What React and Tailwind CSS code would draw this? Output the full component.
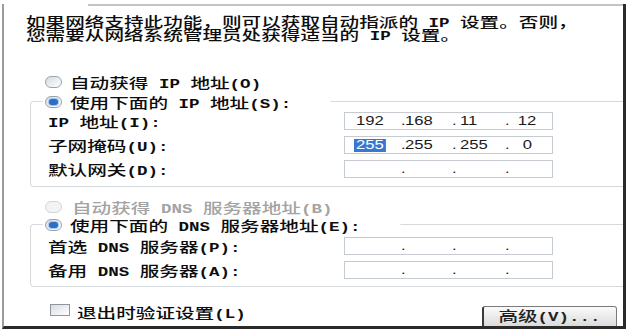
import React from 'react';

// latin parts render half-width, like the old dialog font
const L = ({ children }) => (
  <span className="font-['Liberation_Mono',monospace] text-[12.5px] font-bold leading-none">{children}</span>
);

// the screenshot is stretched sideways, so text is stretched too
const T = ({ children, className = '' }) => (
  <span className={`inline-block origin-left scale-x-[1.4] whitespace-nowrap leading-[14px] ${className}`}>
    {children}
  </span>
);

const Radio = ({ on, disabled }) => (
  <span
    className={`flex h-[12px] w-[17px] shrink-0 items-center justify-center rounded-full border ${
      disabled ? 'border-[#d2d6da] bg-[#f2f3f4]' : 'border-[#9aa3ad] bg-linear-to-br from-[#d6dae0] to-[#ffffff]'
    }`}
  >
    {on && <span className="h-[6px] w-[9px] rounded-full bg-[#2b6ec6] shadow-[0_0_0_1px_#a6c8ee]" />}
  </span>
);

const Num = ({ children, className = '' }) => (
  <span className={`inline-block origin-left scale-x-[1.33] leading-[13px] ${className}`}>{children}</span>
);

const IpBox = ({ v, hl }) => (
  <div className="flex h-[18px] w-[209px] items-center border border-[#c6cbd1] bg-white font-['Liberation_Sans',sans-serif] text-[12.5px] font-normal text-[#1a1a1a]">
    <div className={`w-[56px] ${hl ? 'pl-[9px]' : 'pl-[11px]'}`}>
      {v && <Num className={hl ? 'bg-[#3579d4] px-[1.5px] text-white' : ''}>{v[0]}</Num>}
    </div>
    <div className="w-[4px]"><Num>.</Num></div>
    <div className="w-[47px]">{v && <Num>{v[1]}</Num>}</div>
    <div className="w-[4px]"><Num>.</Num></div>
    <div className="w-[49px] pl-[4px]">{v && <Num>{v[2]}</Num>}</div>
    <div className="w-[4px]"><Num>.</Num></div>
    <div className="w-[36px] text-center">
      {v && <span className="inline-block origin-center scale-x-[1.33] leading-[13px]">{v[3]}</span>}
    </div>
  </div>
);

const Row = ({ label, v, hl }) => (
  <div className="flex h-[24px] items-center">
    <div className="w-[313px] pl-[17px]">
      <T>{label}</T>
    </div>
    <IpBox v={v} hl={hl} />
  </div>
);

export default function App() {
  return (
    <div className="h-[331px] w-[627px] overflow-hidden bg-white pl-[2px] pt-[4px] font-['Noto_Sans_CJK_SC',sans-serif] text-[14px] font-medium text-[#0d0d0d]">
      <div className="h-[325px] w-[624px] overflow-hidden border-b-[3px] border-l-2 border-r-[3px] border-b-[#2b2b2b] border-l-[#9c9c9c] border-r-[#2b2b2b]">
        <div className="ml-[84px] h-[2px] bg-[#c4c4c4]" />

        {/* intro text */}
        <div className="mt-[10px] pl-[22px]">
          <div className="flex h-[13px] items-center">
            <T className="leading-[12px]">如果网络支持此功能，则可以获取自动指派的<L> IP </L>设置。否则，</T>
          </div>
          <div className="flex h-[13px] items-center">
            <T className="leading-[12px]">您需要从网络系统管理员处获得适当的<L> IP </L>设置。</T>
          </div>
        </div>

        {/* IP */}
        <div className="mt-[30px] flex h-[20px] items-center pl-[41px]">
          <Radio />
          <span className="ml-[8px]">
            <T>自动获得<L> IP </L>地址<L>(O)</L></T>
          </span>
        </div>

        <div className="ml-[26px] mt-[9px] rounded-l-[4px] border-y border-l border-[#d5dadf] pb-[5px]">
          <div className="-mt-[10px] flex h-[20px]">
            <div className="ml-[12px] flex h-[20px] items-center bg-white pl-[2px]">
              <Radio on />
              <span className="ml-[8px]">
                <T className="bg-white pr-[28px]">使用下面的<L> IP </L>地址<L>(S):</L></T>
              </span>
            </div>
          </div>
          <div className="-mt-[3px]">
            <Row label={<><L>IP </L>地址<L>(I):</L></>} v={['192', '168', '11', '12']} />
            <Row label={<>子网掩码<L>(U):</L></>} v={['255', '255', '255', '0']} hl />
            <Row label={<>默认网关<L>(D):</L></>} />
          </div>
        </div>

        {/* DNS */}
        <div className="mt-[10px] flex h-[20px] items-center pl-[41px] text-[#a3a3a3]">
          <Radio disabled />
          <span className="ml-[10px]">
            <T>自动获得<L> DNS </L>服务器地址<L>(B)</L></T>
          </span>
        </div>

        <div className="ml-[26px] mt-[7px] rounded-l-[4px] border-y border-l border-[#d5dadf] pb-[4px]">
          <div className="-mt-[10px] flex h-[20px]">
            <div className="ml-[12px] flex h-[20px] items-center bg-white pl-[2px]">
              <Radio on />
              <span className="ml-[8px]">
                <T className="bg-white pr-[28px]">使用下面的<L> DNS </L>服务器地址<L>(E):</L></T>
              </span>
            </div>
          </div>
          <div className="-mt-[1px]">
            <Row label={<>首选<L> DNS </L>服务器<L>(P):</L></>} />
            <Row label={<>备用<L> DNS </L>服务器<L>(A):</L></>} />
          </div>
        </div>

        {/* footer */}
        <div className="mt-[15px] flex items-start pl-[46px]">
          <span className="mt-[2px] h-[12px] w-[20px] shrink-0 border border-[#8f969e] bg-linear-to-br from-[#d8dce1] to-white" />
          <span className="ml-[7px]">
            <T>退出时验证设置<L>(L)</L></T>
          </span>
          <div className="ml-auto mr-[6px] mt-[4px] flex h-[24px] w-[135px] justify-center rounded-t-[3px] border border-l-2 border-[#7a7a7a] border-l-[#3a3a3a] bg-linear-to-b from-[#fbfbfb] to-[#d6d6d6] pt-[1px] text-[#222]">
            <span className="inline-block origin-center scale-x-[1.4] whitespace-nowrap leading-[14px]">
              高级<L>(V)...</L>
            </span>
          </div>
        </div>
      </div>
    </div>
  );
}
